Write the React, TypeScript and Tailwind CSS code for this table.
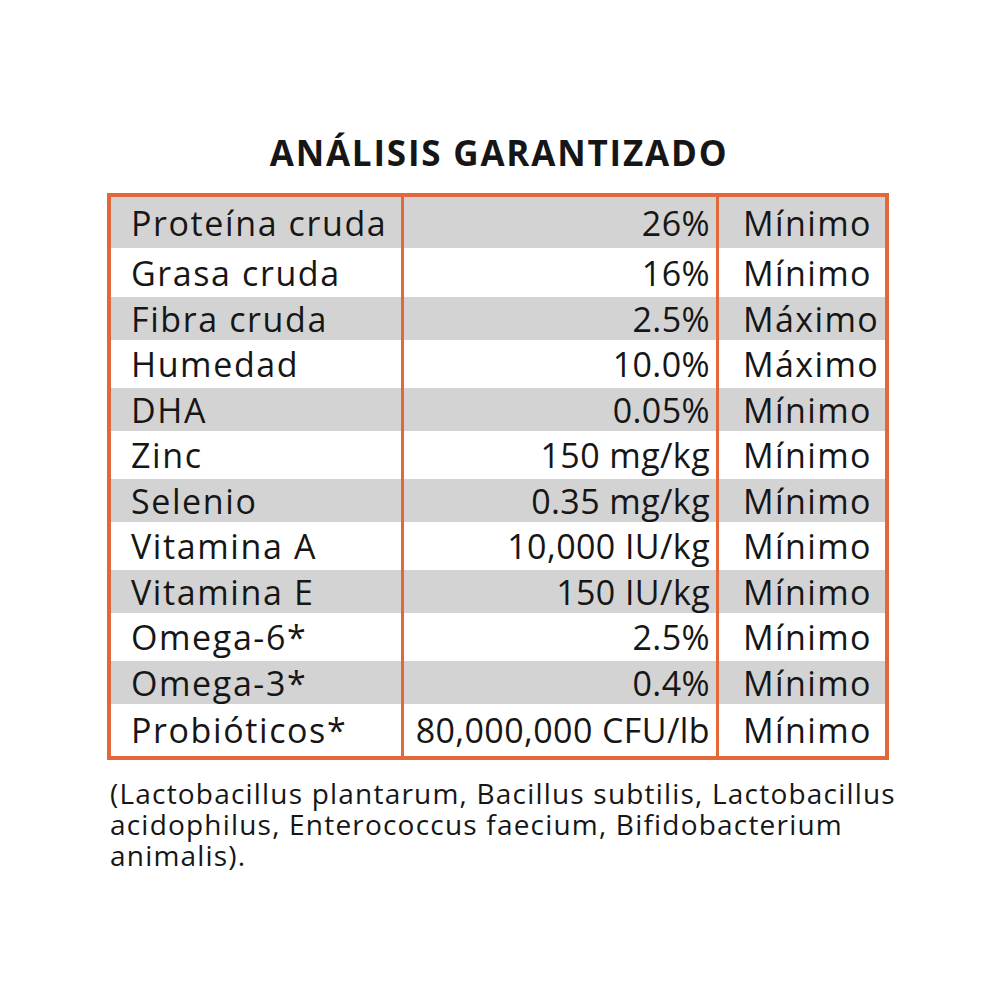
const rows: [string, string, string][] = [
  ["Proteína cruda", "26%", "Mínimo"],
  ["Grasa cruda", "16%", "Mínimo"],
  ["Fibra cruda", "2.5%", "Máximo"],
  ["Humedad", "10.0%", "Máximo"],
  ["DHA", "0.05%", "Mínimo"],
  ["Zinc", "150 mg/kg", "Mínimo"],
  ["Selenio", "0.35 mg/kg", "Mínimo"],
  ["Vitamina A", "10,000 IU/kg", "Mínimo"],
  ["Vitamina E", "150 IU/kg", "Mínimo"],
  ["Omega-6*", "2.5%", "Mínimo"],
  ["Omega-3*", "0.4%", "Mínimo"],
  ["Probióticos*", "80,000,000 CFU/lb", "Mínimo"],
];

// first row and last row sit a little taller than the rest
const heights = ["h-[51px]", "h-[49px]", "h-[43px]", "h-[48px]", "h-[43px]", "h-[48px]", "h-[43px]", "h-[48px]", "h-[43px]", "h-[48px]", "h-[43px]", "h-[52px]"];

export default function App() {
  return (
    <div className="min-h-[1000px] w-[1000px] bg-white pt-[133px] text-[#161616] [font-family:'Open_Sans','Noto_Sans',sans-serif]">
      <h1 className="ml-[-2px] text-center text-[35px] font-bold leading-[40px] tracking-[1.8px]">
        ANÁLISIS GARANTIZADO
      </h1>
      <div className="ml-[107px] mt-[20px] w-[782px] border-4 border-[#e2673b]">
        {rows.map(([name, value, kind], i) => (
          <div
            key={name}
            className={`flex ${heights[i]} items-center text-[34px] leading-none ${i % 2 === 0 ? "bg-[#d3d3d3]" : "bg-white"}`}
          >
            <div className="flex h-full w-[293px] items-center border-r-[3px] border-[#e2673b] pl-[20px] tracking-[1.6px] whitespace-nowrap">
              {name}
            </div>
            <div className="flex h-full w-[315px] items-center justify-end border-r-[3px] border-[#e2673b] pr-[6px] tracking-[0.4px] whitespace-nowrap">
              {value}
            </div>
            <div className="flex h-full flex-1 items-center pl-[24px] tracking-[1.4px] whitespace-nowrap">
              {kind}
            </div>
          </div>
        ))}
      </div>
      <p className="ml-[110px] mt-[18px] w-[800px] text-[28px] leading-[31px] tracking-[1.2px]">
        (Lactobacillus plantarum, Bacillus subtilis, Lactobacillus acidophilus, Enterococcus faecium, Bifidobacterium animalis).
      </p>
    </div>
  );
}
